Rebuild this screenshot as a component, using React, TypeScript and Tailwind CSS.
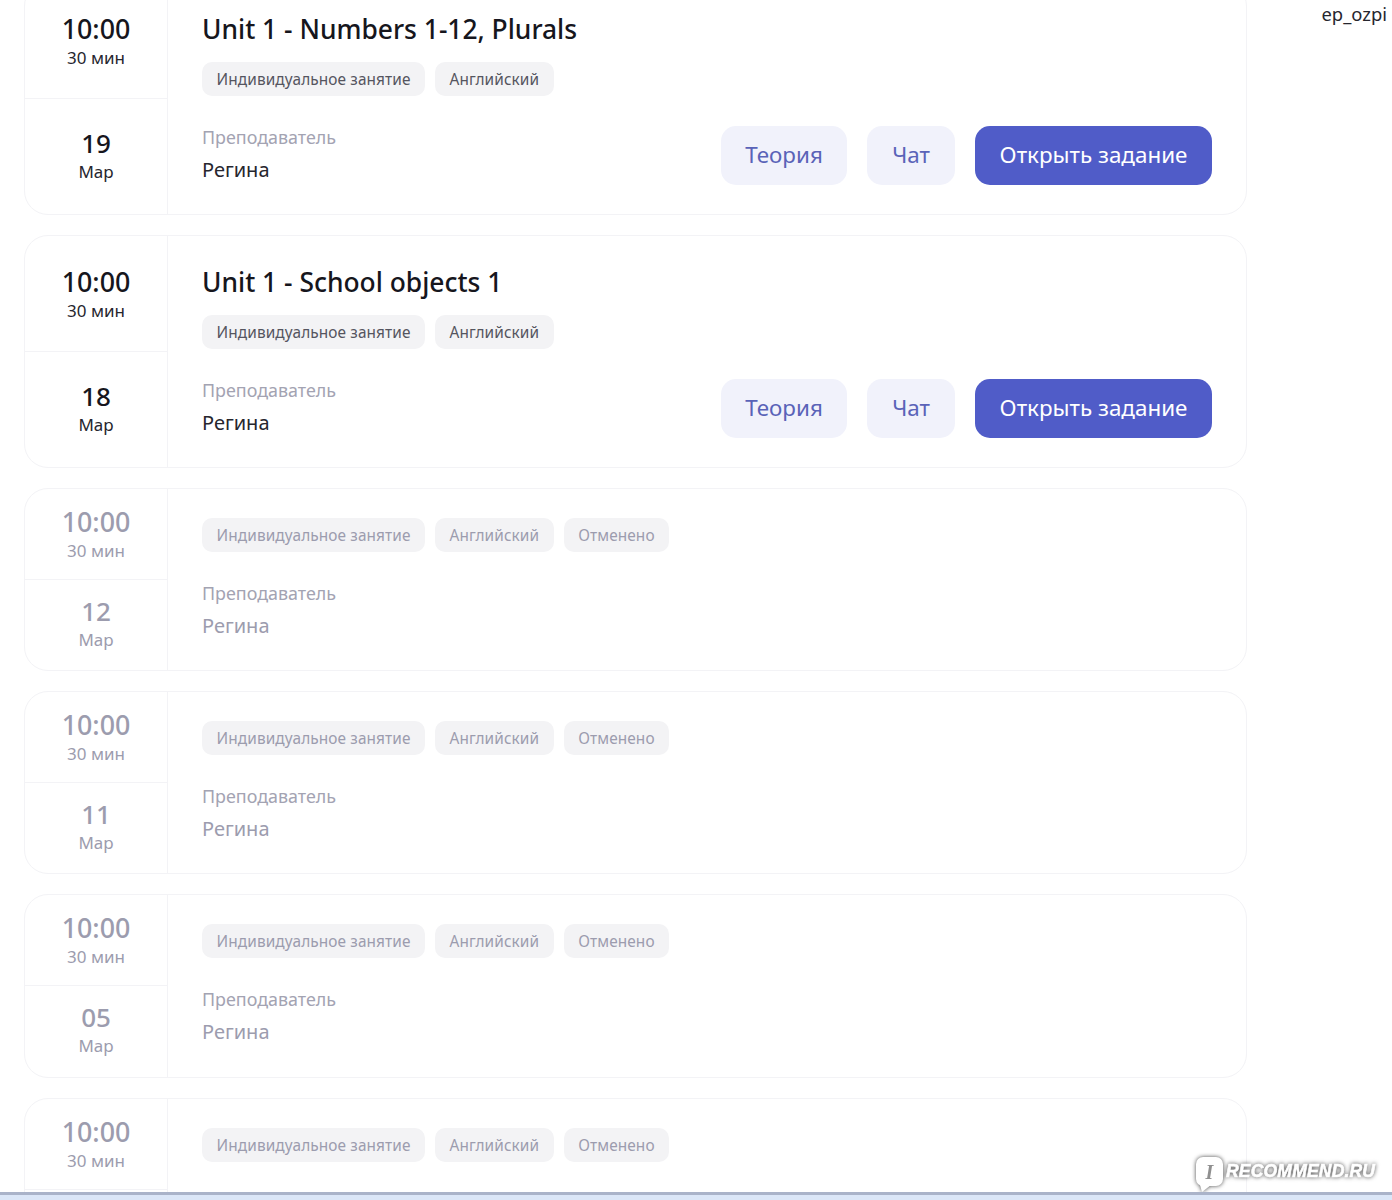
const FONT = "font-['Noto_Sans',sans-serif]"

type Lesson = { day: string; title?: string }

const ACTIVE: Lesson[] = [
  { day: '19', title: 'Unit 1 - Numbers 1-12, Plurals' },
  { day: '18', title: 'Unit 1 - School objects 1' },
]
const CANCELLED: Lesson[] = [{ day: '12' }, { day: '11' }, { day: '05' }, { day: '04' }]

function Tag({ children }: { children: string }) {
  return (
    <span className="flex h-[34px] items-center rounded-[10px] bg-[#f3f3f5] px-[14.5px] pt-[1px] text-[15.4px] tracking-[0.1px]">
      {children}
    </span>
  )
}

function DateColumn({ day, active }: { day: string; active: boolean }) {
  return (
    <div
      className={`flex w-[143px] shrink-0 flex-col border-r border-[#f3f3f6] text-center ${
        active ? 'text-[#16161d]' : 'text-[#9c9cae]'
      }`}
    >
      <div className={`flex flex-col items-center border-b border-[#f3f3f6] ${active ? 'h-[116px] pt-[28px]' : 'h-[91px] pt-[15px]'}`}>
        <span className="text-[26.8px] leading-[36px] font-medium">10:00</span>
        <span className={`text-[17px] leading-[22px] ${active ? 'text-[#26262e]' : ''}`}>30 мин</span>
      </div>
      <div className={`flex flex-col items-center ${active ? 'pt-[27px]' : 'pt-[14px]'}`}>
        <span className="text-[26px] leading-[34px] font-medium">{day}</span>
        <span className={`text-[17px] leading-[24px] ${active ? 'text-[#26262e]' : ''}`}>Мар</span>
      </div>
    </div>
  )
}

function LessonCard({ lesson }: { lesson: Lesson }) {
  const active = Boolean(lesson.title)
  return (
    <div
      className={`flex rounded-[24px] border border-[#f3f3f6] bg-white ${
        active ? 'h-[233px]' : 'h-[183.33px]'
      }`}
    >
      <DateColumn day={lesson.day} active={active} />
      <div className={`flex min-w-0 flex-1 pr-[34px] pl-[34px] ${active ? 'pt-[27px]' : 'pt-[29px]'}`}>
        <div className="flex-1">
          {lesson.title && (
            <h2 className="mb-[14px] text-[26.4px] leading-[38px] font-medium text-[#16161d]">{lesson.title}</h2>
          )}
          <div className={`flex gap-[10px] ${active ? 'text-[#55555f]' : 'text-[#9c9cae]'}`}>
            <Tag>Индивидуальное занятие</Tag>
            <Tag>Английский</Tag>
            {!active && <Tag>Отменено</Tag>}
          </div>
          <div className="mt-[26px] text-[17.9px] leading-[30px] text-[#a3a3b2]">Преподаватель</div>
          <div className={`mt-[3px] text-[20px] leading-[30px] ${active ? 'text-[#26262e]' : 'text-[#9c9cae]'}`}>
            Регина
          </div>
        </div>
        {active && (
          <div className="mt-[116px] flex h-[59px] gap-[20px] text-[22.4px]">
            <button className="w-[126px] rounded-[15px] bg-[#f1f2fb] pb-[2px] text-[#5a63b8]">Теория</button>
            <button className="w-[88px] rounded-[15px] bg-[#f1f2fb] pb-[2px] text-[#5a63b8]">Чат</button>
            <button className="w-[237px] rounded-[15px] bg-[#505cc8] pb-[2px] text-white">Открыть задание</button>
          </div>
        )}
      </div>
    </div>
  )
}

function Watermark() {
  return (
    <div className="absolute top-[1157px] left-[1196px] flex items-center gap-[3px] text-white [filter:drop-shadow(0_0_2px_rgba(50,50,50,0.9))]">
      <span className="relative flex h-[29px] w-[27px] items-center justify-center rounded-[7px] bg-white font-['Liberation_Serif',serif] text-[20px] font-bold text-[#8f8f8f] italic">
        I
        <svg className="absolute -bottom-[6px] left-[4px]" width="11" height="7" viewBox="0 0 11 7" fill="#fff">
          <path d="M0 0h11L2 7z" />
        </svg>
      </span>
      <span className="font-['Liberation_Sans',sans-serif] text-[17.5px] font-bold tracking-[0.2px] italic [-webkit-text-stroke:0.6px_white]">
        RECOMMEND.RU
      </span>
    </div>
  )
}

export default function App() {
  return (
    <div className={`relative h-[1200px] overflow-hidden bg-white ${FONT}`}>
      <div className="-mt-[18.2px] ml-[24px] flex w-[1223px] flex-col gap-[20px]">
        {[...ACTIVE, ...CANCELLED].map((lesson) => (
          <LessonCard key={lesson.day} lesson={lesson} />
        ))}
      </div>
      <span className="absolute top-0 right-[5px] text-[18.4px] text-[#26262e]">ep_ozpi</span>
      <Watermark />
      <div className="absolute inset-x-0 bottom-0 h-[8px] border-t-[3px] border-[#aab3c9] bg-[#dbe6f7]" />
    </div>
  )
}
